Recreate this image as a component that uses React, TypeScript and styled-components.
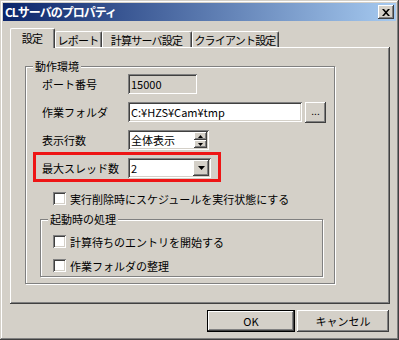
import styled, { createGlobalStyle } from "styled-components";

const face = "#d4d0c8";
const shadow = "#808080";
const dark = "#404040";

const GlobalStyle = createGlobalStyle`
  html, body {
    margin: 0;
    padding: 0;
    background: ${face};
  }
  body {
    font-family: "Noto Sans CJK JP", "Liberation Sans", sans-serif;
    font-size: 11px;
    white-space: nowrap;
    color: #000;
  }
`;

const Window = styled.div`
  width: 399px;
  height: 340px;
  box-sizing: border-box;
  padding: 3px;
  background: ${face};
  box-shadow: inset -1px -1px ${dark}, inset 1px 1px ${face},
    inset -2px -2px ${shadow}, inset 2px 2px #fff;
  display: flex;
  flex-direction: column;
`;

const TitleBar = styled.div`
  height: 18px;
  display: flex;
  align-items: center;
  justify-content: space-between;
  padding: 0 2px;
  background: linear-gradient(to right, #0a246a, #a6caf0);
`;

const Title = styled.span`
  color: #fff;
  font-size: 12px;
  font-weight: bold;
  line-height: 18px;
  letter-spacing: -1px;
`;

const Raised = styled.div`
  box-sizing: border-box;
  background: ${face};
  box-shadow: inset -1px -1px ${dark}, inset 1px 1px #fff,
    inset -2px -2px ${shadow}, inset 2px 2px ${face};
  display: flex;
  align-items: center;
  justify-content: center;
`;

const CloseButton = styled(Raised)`
  width: 16px;
  height: 14px;
`;

const Body = styled.div`
  flex: 1;
  display: flex;
  flex-direction: column;
  padding: 7px 6px 0 7px;
`;

const TabRow = styled.div`
  position: relative;
  z-index: 1;
  height: 20px;
  display: flex;
  align-items: flex-end;
`;

const Tab = styled.div<{ $active?: boolean; $w: number }>`
  width: ${(p) => p.$w}px;
  height: ${(p) => (p.$active ? 20 : 16)}px;
  margin-bottom: ${(p) => (p.$active ? 0 : 1)}px;
  padding: 0 1px ${(p) => (p.$active ? 2 : 0)}px 0;
  box-sizing: border-box;
  background: ${face};
  border-top: 1px solid #fff;
  border-left: 1px solid #fff;
  border-right: 1px solid ${dark};
  border-radius: 2px 2px 0 0;
  box-shadow: inset -1px 0 ${shadow};
  display: flex;
  align-items: center;
  justify-content: center;
  line-height: 14px;
  font-size: 11px;
  letter-spacing: -0.8px;
`;

const Panel = styled.div`
  margin-top: -1px;
  height: 257px;
  box-sizing: border-box;
  padding: 19px 0 0 15px;
  box-shadow: inset -1px -1px ${dark}, inset 1px 1px #fff,
    inset -2px -2px ${shadow};
`;

const Group = styled.div<{ $w: number; $h: number }>`
  position: relative;
  width: ${(p) => p.$w}px;
  height: ${(p) => p.$h}px;
  box-sizing: border-box;
  border: 1px solid ${shadow};
  box-shadow: inset 1px 1px #fff, 1px 1px #fff;
  display: flex;
  flex-direction: column;
`;

const Legend = styled.span`
  position: absolute;
  top: -8px;
  left: 7px;
  padding: 0 2px;
  background: ${face};
  line-height: 14px;
`;

const Form = styled.div`
  display: flex;
  flex-direction: column;
  gap: 8px;
  padding: 7px 0 0 16px;
`;

const Row = styled.div`
  display: flex;
  align-items: center;
  height: 20px;
`;

const Label = styled.span`
  width: 86px;
  flex-shrink: 0;
`;

const Highlight = styled.div`
  align-self: flex-start;
  display: flex;
  align-items: center;
  border: 3px solid #ee1515;
  margin: -6px 0 -4px -9px;
  padding: 3px 7px 1px 6px;
`;

const Field = styled.div<{ $w: number; $readOnly?: boolean }>`
  position: relative;
  width: ${(p) => p.$w}px;
  height: 20px;
  box-sizing: border-box;
  background: ${(p) => (p.$readOnly ? face : "#fff")};
  box-shadow: inset 1px 1px ${shadow}, inset -1px -1px #fff,
    inset 2px 2px ${dark}, inset -2px -2px ${face};
  display: flex;
  align-items: center;
  padding: 0 2px 0 3px;
  line-height: 14px;
`;

const FieldText = styled.span`
  flex: 1;
`;

const BrowseButton = styled(Raised)`
  width: 21px;
  height: 21px;
  margin-left: 3px;
  font-size: 10px;
  padding-bottom: 4px;
`;

const SpinBox = styled.div`
  display: flex;
  flex-direction: column;
`;

const SpinHalf = styled(Raised)`
  width: 13px;
  height: 8px;
`;

const DropButton = styled(Raised)`
  width: 16px;
  height: 16px;
`;

const CheckRow = styled.div<{ $indent?: number; $top?: number }>`
  display: flex;
  align-items: center;
  gap: 4px;
  height: 13px;
  margin-left: ${(p) => p.$indent ?? 0}px;
  margin-top: ${(p) => p.$top ?? 0}px;
`;

const CheckBox = styled.div`
  width: 13px;
  height: 13px;
  flex-shrink: 0;
  box-sizing: border-box;
  background: #fff;
  box-shadow: inset 1px 1px ${shadow}, inset -1px -1px #fff,
    inset 2px 2px ${dark}, inset -2px -2px ${face};
`;

const InnerGroup = styled(Group)`
  margin: 6px 0 0 -2px;
  padding: 15px 0 0 12px;
  gap: 11px;
`;

const ButtonRow = styled.div`
  display: flex;
  justify-content: flex-end;
  gap: 2px;
  margin-top: 6px;
  padding-right: 1px;
`;

const PushButton = styled(Raised)<{ $default?: boolean; $w: number }>`
  width: ${(p) => p.$w}px;
  height: 22px;
  line-height: 14px;
  ${(p) =>
    p.$default &&
    `box-shadow: inset 0 0 0 1px #000, inset -2px -2px ${dark}, inset 2px 2px #fff, inset -3px -3px ${shadow};`}
`;

const Arrow = ({ up, w, h }: { up?: boolean; w: number; h: number }) => (
  <svg width={w} height={h} viewBox={`0 0 ${w} ${h}`}>
    <polygon
      points={up ? `0,${h} ${w},${h} ${w / 2},0` : `0,0 ${w},0 ${w / 2},${h}`}
      fill="#000"
    />
  </svg>
);

function App() {
  return (
    <>
      <GlobalStyle />
      <Window>
        <TitleBar>
          <Title>CLサーバのプロパティ</Title>
          <CloseButton>
            <svg width="8" height="7" viewBox="0 0 8 7">
              <path d="M0 0h2l2 2.2L6 0h2L5 3.5 8 7H6L4 4.8 2 7H0l3-3.5z" fill="#000" />
            </svg>
          </CloseButton>
        </TitleBar>
        <Body>
          <TabRow>
            <Tab $active $w={45}>設定</Tab>
            <Tab $w={47}>レポート</Tab>
            <Tab $w={90}>計算サーバ設定</Tab>
            <Tab $w={87}>クライアント設定</Tab>
          </TabRow>
          <Panel>
            <Group $w={310} $h={218}>
              <Legend>動作環境</Legend>
              <Form>
                <Row>
                  <Label>ポート番号</Label>
                  <Field $w={69} $readOnly>
                    <FieldText>15000</FieldText>
                  </Field>
                </Row>
                <Row>
                  <Label>作業フォルダ</Label>
                  <Field $w={174}>
                    <FieldText>C:¥HZS¥Cam¥tmp</FieldText>
                  </Field>
                  <BrowseButton>...</BrowseButton>
                </Row>
                <Row>
                  <Label>表示行数</Label>
                  <Field $w={81}>
                    <FieldText>全体表示</FieldText>
                    <SpinBox>
                      <SpinHalf>
                        <Arrow up w={5} h={3} />
                      </SpinHalf>
                      <SpinHalf>
                        <Arrow w={5} h={3} />
                      </SpinHalf>
                    </SpinBox>
                  </Field>
                </Row>
                <Highlight>
                  <Label>最大スレッド数</Label>
                  <Field $w={83}>
                    <FieldText>2</FieldText>
                    <DropButton>
                      <Arrow w={7} h={4} />
                    </DropButton>
                  </Field>
                </Highlight>
                <CheckRow $indent={11} $top={6}>
                  <CheckBox />
                  実行削除時にスケジュールを実行状態にする
                </CheckRow>
                <InnerGroup $w={283} $h={58}>
                  <Legend>起動時の処理</Legend>
                  <CheckRow>
                    <CheckBox />
                    計算待ちのエントリを開始する
                  </CheckRow>
                  <CheckRow>
                    <CheckBox />
                    作業フォルダの整理
                  </CheckRow>
                </InnerGroup>
              </Form>
            </Group>
          </Panel>
          <ButtonRow>
            <PushButton $default $w={88}>OK</PushButton>
            <PushButton $w={92}>キャンセル</PushButton>
          </ButtonRow>
        </Body>
      </Window>
    </>
  );
}

export default App;
